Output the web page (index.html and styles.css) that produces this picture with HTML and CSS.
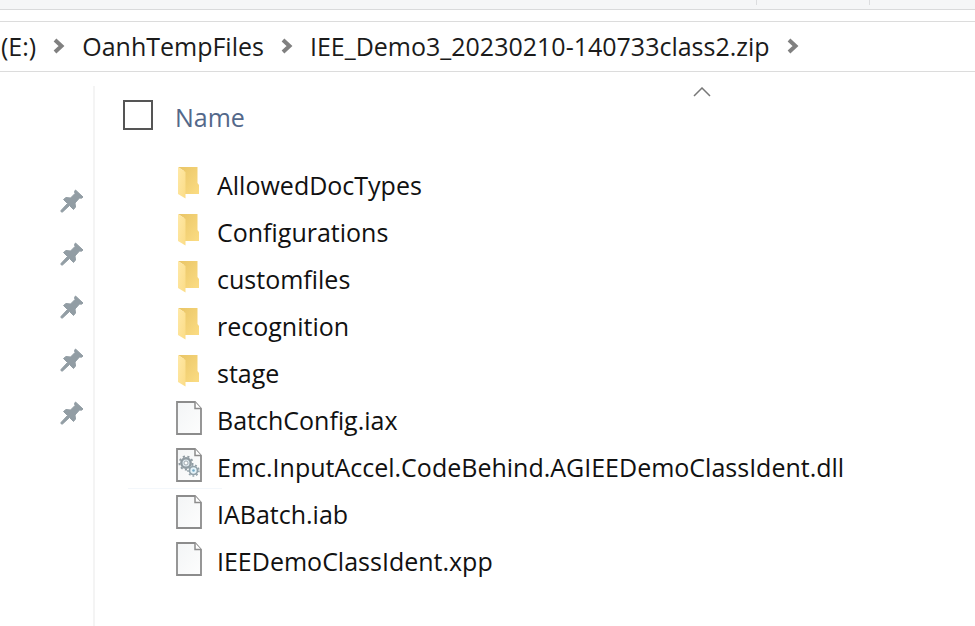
FILE: index.html
```html
<!DOCTYPE html>
<html lang="en">
<head>
<meta charset="utf-8">
<title>IEE_Demo3_20230210-140733class2.zip</title>
<link rel="stylesheet" href="styles.css">
</head>
<body>
<svg class="defs" aria-hidden="true">
  <defs>
    <linearGradient id="back" x1="0" y1="0" x2="1" y2="1"><stop offset="0" stop-color="#e9c566"/><stop offset="1" stop-color="#fbdc83"/></linearGradient>
    <linearGradient id="flap" x1="0" y1="0" x2="1" y2="1"><stop offset="0" stop-color="#ffe9a8"/><stop offset="1" stop-color="#fbdc86"/></linearGradient>
    <linearGradient id="paper" x1="0" y1="0" x2="1" y2="1"><stop offset="0" stop-color="#f3f5f6"/><stop offset="1" stop-color="#fdfdfd"/></linearGradient>
    <symbol id="chevron" viewBox="0 0 12 16"><path d="M2 2 8.500 8 2 14" fill="none" stroke="#808080" stroke-width="4"/></symbol>
    <symbol id="pin" viewBox="0 0 24 24"><path d="M15.500 1 23 8 21.500 9.200 19.500 9 15 14 15.500 18 13.500 20.500 9.500 16.500 2.500 23 1 22.800 1 21.500 7.500 14.500 3.500 10.500 6 8.500 10.500 9 15 4.500 14.500 2.500Z" fill="#929da4" stroke="#929da4" stroke-linejoin="round"/></symbol>
    <symbol id="folder" viewBox="0 0 26 32"><path d="M2 0H21.500V16L23 18V27H8V4Z" fill="url(#back)"/><path d="M2 0 9.500 5V31.500L2 27Z" fill="url(#flap)"/></symbol>
    <symbol id="file" viewBox="0 0 26 34"><path d="M1 1H19L25 7.500V33H1Z" fill="url(#paper)" stroke="#8c8c8c" stroke-width="1.800"/><path d="M19 1V7.500H25" fill="#fff" stroke="#8c8c8c" stroke-width="1.500"/></symbol>
    <symbol id="gears" viewBox="0 0 26 34"><circle cx="10" cy="15" r="4.700" fill="#dfe9ee" stroke="#909ba2" stroke-width="2.400"/><circle cx="10" cy="15" r="6.600" fill="none" stroke="#909ba2" stroke-width="1.800" stroke-dasharray="2.200 2.407"/><circle cx="10" cy="15" r="2" fill="#fff" stroke="#909ba2" stroke-width=".8"/><circle cx="17.500" cy="22.500" r="4" fill="#e4f3fa" stroke="#92a1a9" stroke-width="1.700"/><circle cx="17.500" cy="22.500" r="5.500" fill="none" stroke="#92a1a9" stroke-width="1.500" stroke-dasharray="1.900 1.942"/><circle cx="17.500" cy="22.500" r="1.300" fill="#75a9c5"/></symbol>
  </defs>
</svg>
<div class="ribbon"><span class="group"></span><span class="group"></span></div>
<nav class="address" aria-label="Location">
  <a href="#">(E:)</a><svg class="chevron"><use href="#chevron"/></svg>
  <a href="#">OanhTempFiles</a><svg class="chevron"><use href="#chevron"/></svg>
  <a href="#">IEE_Demo3_20230210-140733class2.zip</a><svg class="chevron"><use href="#chevron"/></svg>
</nav>
<div class="content">
  <aside class="quick">
    <svg><use href="#pin"/></svg>
    <svg><use href="#pin"/></svg>
    <svg><use href="#pin"/></svg>
    <svg><use href="#pin"/></svg>
    <svg><use href="#pin"/></svg>
  </aside>
  <main>
    <div class="head">
      <input type="checkbox" aria-label="Select all">
      <button type="button">Name</button>
      <svg class="sort" viewBox="0 0 18 10"><path d="M1 9 9 1 17 9" fill="none" stroke="#777" stroke-width="1.500"/></svg>
    </div>
    <ul>
      <li><svg class="folder"><use href="#folder"/></svg><a href="#">AllowedDocTypes</a></li>
      <li><svg class="folder"><use href="#folder"/></svg><a href="#">Configurations</a></li>
      <li><svg class="folder"><use href="#folder"/></svg><a href="#">customfiles</a></li>
      <li><svg class="folder"><use href="#folder"/></svg><a href="#">recognition</a></li>
      <li><svg class="folder"><use href="#folder"/></svg><a href="#">stage</a></li>
      <li><svg class="file"><use href="#file"/></svg><a href="#">BatchConfig.iax</a></li>
      <li class="edge"><svg class="file"><use href="#file"/><use href="#gears"/></svg><a href="#">Emc.InputAccel.CodeBehind.AGIEEDemoClassIdent.dll</a></li>
      <li><svg class="file"><use href="#file"/></svg><a href="#">IABatch.iab</a></li>
      <li><svg class="file"><use href="#file"/></svg><a href="#">IEEDemoClassIdent.xpp</a></li>
    </ul>
  </main>
</div>
</body>
</html>
```
FILE: styles.css
```css
* { box-sizing: border-box; }

body {
  display: flex;
  flex-direction: column;
  min-height: 100vh;
  margin: 0;
  overflow-x: hidden;
  background: #fff;
  color: #1b1b1b;
  font: 25px/34px "Segoe UI", "Open Sans", "Noto Sans", sans-serif;
}

.defs { position: absolute; width: 0; height: 0; }

a { color: inherit; text-decoration: none; white-space: nowrap; }
svg { display: block; flex: none; }

.ribbon {
  display: flex;
  justify-content: flex-end;
  height: 10px;
  padding-right: 105px;
  padding-bottom: 4px;
  background: #f5f6f7;
  border-bottom: 1px solid #d9dadb;
}

.group { width: 113px; border-right: 1px solid #dcdddf; }

.address {
  display: flex;
  align-items: center;
  gap: 17px;
  margin-top: 11px;
  padding: 7px 1px 8px;
  border: solid #dcdcdc;
  border-width: 1px 0;
}

.chevron { width: 12px; height: 16px; }

.content { display: flex; flex: 1; padding-top: 14px; }

.quick {
  display: flex;
  flex-direction: column;
  align-items: flex-end;
  gap: 29px;
  width: 95px;
  padding: 103px 9px 0 0;
  border-right: 2px solid #f4f4f4;
}

.quick svg { width: 24px; height: 24px; }

main { flex: 1; min-width: 0; padding: 14px 28px 0; }

.head {
  position: relative;
  display: flex;
  align-items: flex-start;
  gap: 22px;
}

.head input {
  width: 30px;
  height: 30px;
  margin: 0;
  appearance: none;
  background: #fff;
  border: 2px solid #555;
}

.head button {
  padding: 0;
  background: none;
  border: 0;
  color: #53688a;
  font: inherit;
}

.sort {
  position: absolute;
  top: -13px;
  left: 570px;
  width: 18px;
  height: 10px;
}

ul { margin: 27px 0 0; padding: 0 0 0 53px; list-style: none; }

li {
  position: relative;
  display: flex;
  align-items: center;
  gap: 15px;
  height: 47px;
  color: #111;
}

.folder { width: 26px; height: 32px; margin-bottom: 4px; }
.file { width: 26px; height: 34px; margin-bottom: 4px; }

.edge::after {
  content: "";
  position: absolute;
  bottom: 1px;
  left: -48px;
  width: 94px;
  height: 1px;
  background: #f3f7fb;
}
```
